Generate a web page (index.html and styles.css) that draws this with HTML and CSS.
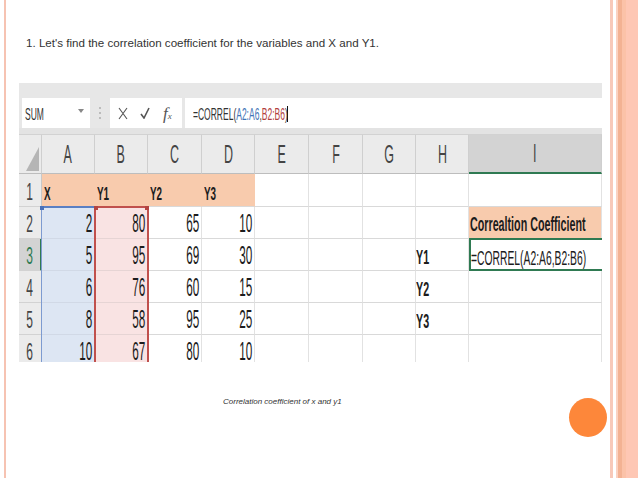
FILE: index.html
```
<!DOCTYPE html>
<html>
<head>
<meta charset="utf-8">
<title>Correlation coefficient</title>
<link rel="stylesheet" href="styles.css">
</head>
<body>
<div class="slide">
  <div class="rule-l"></div>
  <main class="main">
    <p class="title">1. Let's find the correlation coefficient for the variables and X and Y1.</p>
    <div class="excel">
      <div class="fbar">
        <div class="namebox"><span class="t">SUM</span><span class="arrow"></span></div>
        <div class="dots"><i></i><i></i><i></i></div>
        <div class="funcbox">
          <svg class="ic-x" width="10" height="13" viewBox="0 0 10 13"><path d="M1 1 L9 12 M9 1 L1 12" stroke="#555" stroke-width="1.1" fill="none"/></svg>
          <svg class="ic-ok" width="10" height="12" viewBox="0 0 10 12"><path d="M1 7 L4 11 L9 1" stroke="#555" stroke-width="1.6" fill="none"/></svg>
          <span class="fx"><i>f</i><span class="fx-x">x</span></span>
        </div>
        <div class="formula"><span class="t">=CORREL(<span class="ref-a">A2:A6</span>,<span class="ref-b">B2:B6</span>)</span><span class="caret"></span></div>
      </div>
      <div class="strip"></div>
      <div class="grid">
        <div class="c ch corner"><svg width="22" height="39" viewBox="0 0 22 39"><polygon points="20,12 20,36 7,36" fill="#b5b5b5"/></svg></div>
        <div class="c ch"><span class="t">A</span></div>
        <div class="c ch"><span class="t">B</span></div>
        <div class="c ch"><span class="t">C</span></div>
        <div class="c ch"><span class="t">D</span></div>
        <div class="c ch"><span class="t">E</span></div>
        <div class="c ch"><span class="t">F</span></div>
        <div class="c ch"><span class="t">G</span></div>
        <div class="c ch"><span class="t">H</span></div>
        <div class="c ch sel"><span class="t">I</span></div>

        <div class="c rh"><span class="t">1</span></div>
        <div class="c lb1 peach"><span class="t">X</span></div>
        <div class="c lb1 peach"><span class="t">Y1</span></div>
        <div class="c lb1 peach"><span class="t">Y2</span></div>
        <div class="c lb1 peach"><span class="t">Y3</span></div>
        <div class="c"></div><div class="c"></div><div class="c"></div><div class="c"></div><div class="c"></div>

        <div class="c rh"><span class="t">2</span></div>
        <div class="c num blue"><span class="t">2</span></div>
        <div class="c num pink"><span class="t">80</span></div>
        <div class="c num"><span class="t">65</span></div>
        <div class="c num"><span class="t">10</span></div>
        <div class="c"></div><div class="c"></div><div class="c"></div><div class="c"></div>
        <div class="c lbh peach2"><span class="t">Correaltion Coefficient</span></div>

        <div class="c rh sel"><span class="t">3</span></div>
        <div class="c num blue"><span class="t">5</span></div>
        <div class="c num pink"><span class="t">95</span></div>
        <div class="c num"><span class="t">69</span></div>
        <div class="c num"><span class="t">30</span></div>
        <div class="c"></div><div class="c"></div><div class="c"></div>
        <div class="c lbh"><span class="t">Y1</span></div>
        <div class="c frm active"><span class="t">=CORREL(A2:A6,B2:B6)</span></div>

        <div class="c rh"><span class="t">4</span></div>
        <div class="c num blue"><span class="t">6</span></div>
        <div class="c num pink"><span class="t">76</span></div>
        <div class="c num"><span class="t">60</span></div>
        <div class="c num"><span class="t">15</span></div>
        <div class="c"></div><div class="c"></div><div class="c"></div>
        <div class="c lbh"><span class="t">Y2</span></div>
        <div class="c"></div>

        <div class="c rh"><span class="t">5</span></div>
        <div class="c num blue"><span class="t">8</span></div>
        <div class="c num pink"><span class="t">58</span></div>
        <div class="c num"><span class="t">95</span></div>
        <div class="c num"><span class="t">25</span></div>
        <div class="c"></div><div class="c"></div><div class="c"></div>
        <div class="c lbh"><span class="t">Y3</span></div>
        <div class="c"></div>

        <div class="c rh"><span class="t">6</span></div>
        <div class="c num blue"><span class="t">10</span></div>
        <div class="c num pink"><span class="t">67</span></div>
        <div class="c num"><span class="t">80</span></div>
        <div class="c num"><span class="t">10</span></div>
        <div class="c"></div><div class="c"></div><div class="c"></div><div class="c"></div><div class="c"></div>

        <div class="rng rng-a"></div>
        <div class="rng rng-b"></div>
      </div>
    </div>
    <div class="foot">
      <p class="caption">Correlation coefficient of x and y1</p>
      <div class="dot"></div>
    </div>
  </main>
  <div class="rule-r"></div>
  <div class="gap"></div>
  <div class="stripe"></div>
</div>
</body>
</html>
```
FILE: styles.css
```
* { box-sizing: border-box; }
html, body { margin: 0; padding: 0; }
body {
  width: 638px;
  height: 478px;
  overflow: hidden;
  background: #fff;
  font-family: "Liberation Sans", Arial, sans-serif;
}
.slide { display: flex; height: 478px; }
.rule-l { width: 2px; margin-left: 4px; background: #f6c3b2; }
.main { width: 604px; display: flex; flex-direction: column; }
.rule-r { width: 3px; background: #f8c9b9; }
.gap { width: 3px; }
.stripe {
  flex: 1;
  background: linear-gradient(to right, #fbd2c1 0, #fbd2c1 2px, #f3b293 2px, #f3b293 6px, #fbc2a8 6px, #fbc2a8 10px, #fec7b4 10px);
}

.title {
  margin: 36px 0 0 20px;
  font-size: 11.6px;
  line-height: 14px;
  color: #333;
}

.excel {
  margin: 33px 0 0 13px;
  width: 583px;
  height: 279px;
  overflow: hidden;
  background: #e7e7e7;
}
.fbar { display: flex; height: 45px; padding: 15px 0 0 3px; }
.fbar .t { display: inline-block; transform: scaleX(.5); transform-origin: left bottom; }
.namebox {
  width: 68px;
  height: 30px;
  background: #fff;
  display: flex;
  align-items: flex-end;
  padding: 0 0 5px 3px;
  font-size: 17px;
  line-height: 1;
  color: #333;
  white-space: nowrap;
}
.arrow {
  margin: 0 6px 10px auto;
  width: 0; height: 0;
  border-left: 3px solid transparent;
  border-right: 3px solid transparent;
  border-top: 4px solid #888;
}
.dots {
  width: 20px;
  height: 30px;
  display: flex;
  flex-direction: column;
  align-items: center;
  justify-content: center;
  gap: 3px;
}
.dots i { width: 2px; height: 2px; background: #bcbcbc; }
.funcbox {
  width: 72px;
  height: 30px;
  background: #fff;
  display: flex;
  align-items: center;
  padding-left: 8px;
}
.ic-x { margin-right: 12px; }
.ic-ok { margin-right: 13px; }
.fx { font-family: "Liberation Serif", serif; color: #555; line-height: 1; }
.fx i { font-size: 17px; }
.fx-x { font-size: 9px; font-style: italic; }
.formula {
  flex: 1;
  height: 30px;
  margin-left: 3px;
  background: #fff;
  display: flex;
  align-items: flex-end;
  padding: 0 0 5px 8px;
  font-size: 17px;
  line-height: 1;
  color: #333;
  white-space: nowrap;
}
.formula .t { width: 188px; }
.ref-a { color: #3f74b6; }
.ref-b { color: #b3403e; }
.caret { width: 1px; height: 16px; background: #111; margin: 0 0 1px -94px; }

.strip { height: 6px; background: #e3e3e3; }

.grid {
  position: relative;
  display: grid;
  grid-template-columns: 23px 53px 53px 54px 53px 54px 54px 53px 53px 133px;
  grid-template-rows: 40px 33px repeat(5, 32px);
  background: #fff;
}
.c {
  display: flex;
  align-items: flex-end;
  min-width: 0;
  white-space: nowrap;
  line-height: 1;
  color: #1c1c1c;
  border-right: 1px solid #e2e2e2;
  border-bottom: 1px solid #d9d9d9;
}
.t { display: inline-block; transform-origin: left bottom; }

.ch {
  background: #ebebeb;
  border-top: 1px solid #d2d2d2;
  border-right-color: #cfcfcf;
  border-bottom-color: #bdbdbd;
  justify-content: center;
  font-size: 26px;
  color: #444;
  padding-bottom: 6px;
}
.ch .t { transform: scaleX(.48); transform-origin: center bottom; }
.ch.sel { background: #d3d3d3; border-bottom: 2px solid #2f7a52; }
.corner { padding: 0; align-items: stretch; }

.rh {
  background: #ebebeb;
  border-right-color: #c8c8c8;
  border-bottom-color: #d2d2d2;
  justify-content: center;
  font-size: 24px;
  color: #444;
  padding-bottom: 2px;
}
.rh .t { transform: scaleX(.5); transform-origin: center bottom; }
.rh.sel { background: #d3d3d3; color: #2f7a52; border-right: 2px solid #2f7a52; }

.num { justify-content: flex-end; font-size: 25.5px; padding: 0 2px 2px 0; }
.num .t { transform: scaleX(.46); transform-origin: right bottom; }

.lb1 { font-size: 18px; font-weight: bold; padding: 0 0 3px 2px; }
.lb1 .t { transform: scaleX(.55); }
.lbh { font-size: 19.5px; font-weight: bold; padding: 0 0 3px 0; }
.lbh .t { transform: scaleX(.55); }
.frm { font-size: 19.5px; padding: 0 0 1px 0; }
.frm .t { transform: scaleX(.53); }

.peach { background: #f8cbad; border-right-color: #f8cbad; }
.peach2 { background: #f8cbad; border-bottom-color: #f8cbad; padding-bottom: 4px; padding-left: 1px; }
.blue { background: #dde6f3; border-bottom-color: #d1d9e6; }
.pink { background: #f9e3e3; border-bottom-color: #e6d4d4; }
.active { border: 2px solid #2f7a52; border-right: none; margin-top: -1px; }

.rng {
  position: absolute;
  grid-row: 3 / 8;
  top: -1px;
  left: -1px;
  right: -1px;
  bottom: 0;
}
.rng-a { grid-column: 2 / 3; border-top: 2px solid #5a7fc3; border-left: 1px solid #7d9bd0; }
.rng-b { grid-column: 3 / 4; border: 2px solid #c0504d; border-bottom: none; }
.rng::before, .rng::after {
  content: "";
  position: absolute;
  top: -2px;
  width: 4px;
  height: 4px;
}
.rng::before { left: -2px; }
.rng::after { right: -2px; }
.rng-a::before, .rng-a::after { background: #4a70b8; }
.rng-b::before, .rng-b::after { background: #b34441; }

.foot { display: flex; align-items: flex-start; margin-top: 35px; }
.caption {
  margin: 0 0 0 217px;
  font-size: 8px;
  line-height: 10px;
  font-style: italic;
  color: #333;
}
.dot {
  margin: 1px 3px 0 auto;
  width: 38px;
  height: 39px;
  border-radius: 50%;
  background: #fd873a;
}
```
